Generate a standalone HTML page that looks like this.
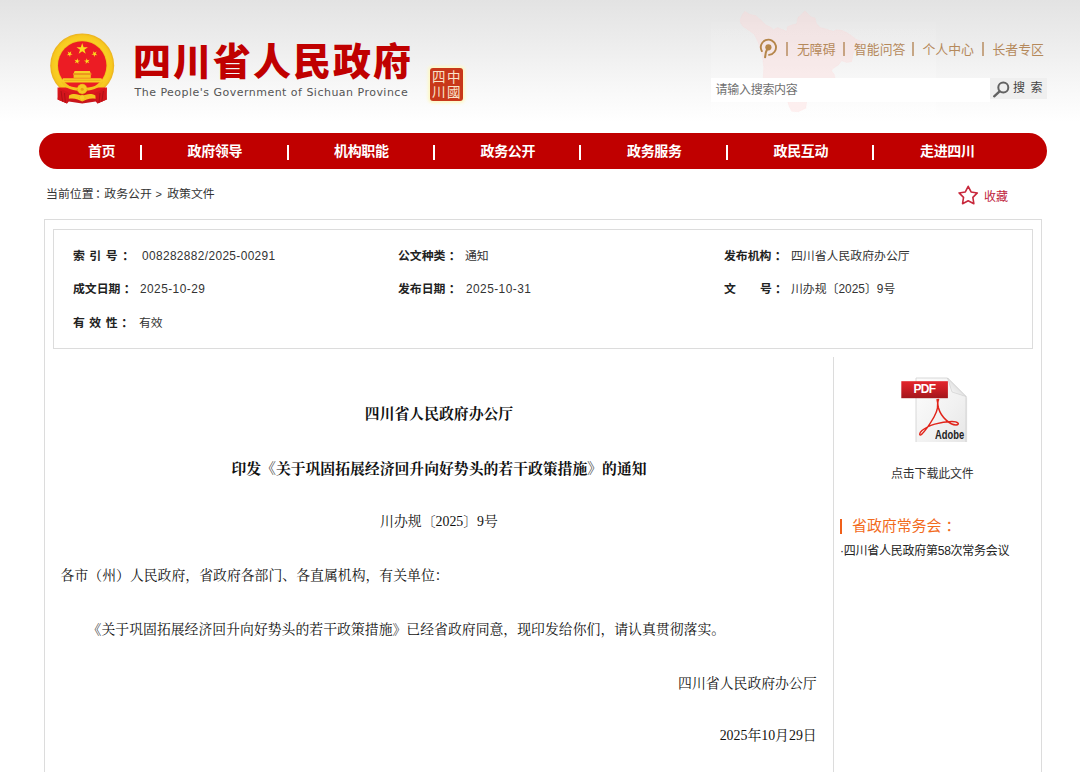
<!DOCTYPE html>
<html lang="zh-CN">
<head>
<meta charset="utf-8">
<title>四川省人民政府办公厅印发《关于巩固拓展经济回升向好势头的若干政策措施》的通知</title>
<style>
*{box-sizing:border-box;margin:0;padding:0}
html,body{width:1080px;height:772px;overflow:hidden;background:#fff}
body{position:relative;font-family:"Liberation Sans","Noto Sans CJK SC",sans-serif;font-size:12px;color:#333}
.abs{position:absolute;white-space:nowrap}
#hdbg{left:0;top:0;width:1080px;height:130px;background:linear-gradient(#e3e3e3 0,#ececec 40px,#f8f8f8 90px,#fff 122px)}
#title{left:133px;top:35.7px;font-size:38px;line-height:52px;font-weight:900;color:#c00000;letter-spacing:2px;font-family:"Liberation Sans","Noto Sans CJK SC",sans-serif}
#sub{left:134.5px;top:85px;font-family:'DejaVu Sans','Liberation Sans',sans-serif;font-size:11px;line-height:16px;color:#555;letter-spacing:0.48px}
.tl{top:39.5px;font-size:12.87px;line-height:20px;color:#b5895b}
.tsp{top:42px;width:2px;height:14px;background:#b5895b;opacity:.72}
#search{left:710.6px;top:77.5px;width:279.4px;height:24px;background:#fff;font-size:12px;line-height:24px;color:#707070;padding-left:5px;letter-spacing:-0.3px}
#sbtn{left:990px;top:78px;width:56.5px;height:21px;background:#efefef;font-size:12px;line-height:21px;color:#444}
#nav{left:39px;top:133px;width:1008px;height:36px;border-radius:18px;background:#c00000}
#nav .it{position:absolute;top:0;height:36px;line-height:36px;color:#fff;font-weight:bold;font-size:14px;letter-spacing:-0.4px;text-align:center;width:120px;margin-left:-60px}
#nav .sp{position:absolute;top:11.5px;width:2px;height:15px;background:#fff}
.cr{top:186.2px;font-size:11.9px;line-height:16px;color:#333}
#fav{left:984px;top:189px;font-size:12px;line-height:16px;color:#c0243c}
#outer{left:44px;top:219px;width:998px;height:600px;border:1px solid #dcdcdc;background:#fff}
#meta{left:53px;top:229px;width:980px;height:120px;border:1px solid #dcdcdc}
.lb{font-weight:bold;color:#222;font-size:11.88px;line-height:16px}
.lb i{font-style:normal;margin-left:3.3px;letter-spacing:0}
.vl{color:#333;font-size:11.88px;line-height:16px}
#vline{left:833px;top:357px;width:1px;height:420px;background:#dcdcdc}
.ser{font-family:"Liberation Serif","Noto Serif CJK SC",serif;color:#111}
.t1{font-size:14.84px;font-weight:bold;line-height:20px}
.p{font-size:13.86px;line-height:20px}
#seal{left:430px;top:68px;width:33px;height:33px;background:#c8371a;border-radius:3px;box-shadow:0 0 3px 1.5px #fdf8c6}
#seal span{position:absolute;font-family:"Noto Sans CJK SC",sans-serif;font-weight:400;font-size:13.5px;line-height:15px;color:#f9e3c8}
#pdf{left:899.5px;top:369.6px;width:72px;height:76px}
</style>
</head>
<body>
<div class="abs" id="hdbg"></div>
<div class="abs" style="left:711px;top:22px;width:225px;height:102px;background:linear-gradient(rgba(255,255,255,.05),rgba(255,255,255,.14) 30%,rgba(255,255,255,.3))"></div>
<svg class="abs" style="left:0;top:0" width="1080" height="130" viewBox="0 0 1080 130"><polygon points="740.0,20.0 742.5,14.2 745.0,11.3 749.2,14.2 755.8,15.8 760.8,20.0 765.8,25.0 770.0,26.7 773.3,29.7 777.5,27.5 781.7,29.2 786.7,31.3 787.5,26.7 791.7,25.0 796.7,23.7 798.0,17.5 801.7,14.2 805.0,10.8 808.3,14.2 810.8,16.7 815.0,18.0 816.3,23.3 820.0,27.5 826.7,29.2 833.3,31.3 836.7,29.7 841.7,30.3 846.7,32.5 851.7,35.8 855.8,39.2 863.3,41.7 860.8,45.8 856.7,48.3 853.3,53.3 852.5,57.5 851.7,61.7 846.7,62.5 841.7,60.8 838.3,65.0 833.3,68.3 831.3,70.8 834.2,74.2 835.0,78.0 826.7,86.7 816.7,93.3 806.7,101.0 805.8,108.3 798.3,111.7 791.7,111.3 789.2,106.7 787.5,101.0 783.3,93.3 770.0,86.7 763.3,78.0 763.7,66.7 762.5,56.7 760.0,48.3 758.3,42.5 754.2,34.2 748.3,30.0 743.3,26.7 740.8,23.3" fill="rgba(255,210,210,0.32)" stroke="rgba(255,210,210,0.15)" stroke-width="1" stroke-linejoin="round"/></svg>

<svg class="abs" style="left:50px;top:33px" width="65" height="72" viewBox="0 0 65 72">
<defs>
<radialGradient id="gring" cx="50%" cy="50%" r="50%"><stop offset="0.72" stop-color="#e9ab12"/><stop offset="0.8" stop-color="#f9cf25"/><stop offset="0.93" stop-color="#f7c81e"/><stop offset="1" stop-color="#eab020"/></radialGradient>
<linearGradient id="grib" x1="0" y1="0" x2="0" y2="1"><stop offset="0" stop-color="#e5191f"/><stop offset="1" stop-color="#c4141a"/></linearGradient>
</defs>
<circle cx="32.2" cy="32.4" r="32" fill="url(#gring)"/>
<path d="M7.5 54.5 L57 54.5 L56.8 66.5 L47.5 70.6 L45.6 68.6 L32.2 70.4 L18.8 68.6 L17 70.6 L7.6 66.5 Z" fill="url(#grib)"/>
<path d="M7.6 66.5 L17 70.6 L19 60 L9.5 55 Z" fill="#d3151c"/><path d="M56.8 66.5 L47.5 70.6 L45.5 60 L55 55 Z" fill="#d3151c"/>
<path d="M11 58 L12.6 68.6 M14.5 60 L15.4 69.8 M53.4 58 L51.8 68.6 M50 60 L49 69.8" stroke="#a90f14" stroke-width="0.9" fill="none"/>
<circle cx="32.2" cy="32.4" r="24.2" fill="#ec1c24"/>
<polygon points="32.20,10.00 33.55,14.15 37.91,14.15 34.38,16.71 35.73,20.85 32.20,18.29 28.67,20.85 30.02,16.71 26.49,14.15 30.85,14.15" fill="#fbdc1e"/>
<polygon points="21.25,18.22 20.78,20.42 22.73,21.54 20.49,21.78 20.02,23.98 19.11,21.93 16.87,22.16 18.54,20.65 17.63,18.60 19.58,19.72" fill="#fbdc1e"/>
<polygon points="42.95,18.22 44.62,19.72 46.57,18.60 45.66,20.65 47.33,22.16 45.09,21.93 44.18,23.98 43.71,21.78 41.47,21.54 43.42,20.42" fill="#fbdc1e"/>
<polygon points="27.64,25.15 27.95,27.38 30.17,27.77 28.15,28.76 28.46,30.99 26.89,29.37 24.87,30.35 25.93,28.36 24.36,26.74 26.58,27.14" fill="#fbdc1e"/>
<polygon points="36.46,25.15 37.52,27.14 39.74,26.74 38.17,28.36 39.23,30.35 37.21,29.37 35.64,30.99 35.95,28.76 33.93,27.77 36.15,27.38" fill="#fbdc1e"/>
<path d="M24.6 38 L39.8 38 L40.8 40.4 L23.6 40.4 Z" fill="#f8cf27"/>
<rect x="23" y="40.4" width="18.4" height="1.3" fill="#e9b21a"/>
<rect x="23.6" y="41.7" width="17.2" height="3.2" fill="#f6c722"/>
<path d="M13 45.2 L51.4 45.2 L53.4 49.4 L11 49.4 Z" fill="#f8cc24"/>
<path d="M14 47.3 L50.4 47.3" stroke="#e3a815" stroke-width="0.7"/>
<path d="M11 48.6 C13 54.5 22 57.6 28.5 57.8 L32.2 59.6 L36 57.8 C42.5 57.6 51.4 54.5 53.4 48.6 L50.5 49.8 C47.5 53.3 41 54.8 32.2 54.8 C23.4 54.8 17 53.3 14 49.8 Z" fill="#f5c41f"/>
<circle cx="32.2" cy="56" r="4.9" fill="#f6c821" stroke="#e2a512" stroke-width="0.8" stroke-dasharray="1.1 0.9"/>
<circle cx="32.2" cy="56.2" r="1.5" fill="#e8a010"/>
<path d="M19 62.4 C24 59.8 29 61.6 32.2 63.2 C35.4 61.6 40.4 59.8 45.4 62.4 L45.6 65.8 C40.5 64.6 35.5 66.6 32.2 68.4 C29 66.6 24 64.6 18.8 65.8 Z" fill="#f5c41f"/>
<circle cx="32.2" cy="64.6" r="2.7" fill="#f8d02a" stroke="#e2a512" stroke-width="0.6" stroke-dasharray="0.9 0.8"/>
</svg>
<div class="abs" id="seal"><span style="left:2px;top:1px">四</span><span style="left:17px;top:1px">中</span><span style="left:2px;top:16px">川</span><span style="left:17px;top:16px">國</span></div>
<div class="abs" id="title">四川省人民政府</div>
<div class="abs" id="sub">The People's Government of Sichuan Province</div>

<svg class="abs" style="left:759px;top:38px" width="20" height="22" viewBox="0 0 20 22"><path d="M2.82 13.1 A7.6 7.6 0 1 1 10.06 16.87" fill="none" stroke="#b5864a" stroke-width="1.9" stroke-linecap="round"/><circle cx="9.4" cy="9.3" r="3.1" fill="#b5864a"/><path d="M8.4 10.5 C7 13 6.3 16 6.1 19.2" fill="none" stroke="#b5864a" stroke-width="2.1" stroke-linecap="round"/></svg>
<div class="abs tl" style="left:797px">无障碍</div><div class="abs tl" style="left:854px">智能问答</div><div class="abs tl" style="left:922.5px">个人中心</div><div class="abs tl" style="left:992.5px">长者专区</div>
<div class="abs tsp" style="left:786px"></div><div class="abs tsp" style="left:843px"></div><div class="abs tsp" style="left:911.5px"></div><div class="abs tsp" style="left:981.5px"></div>
<div class="abs" id="search">请输入搜索内容</div>
<div class="abs" id="sbtn"><span style="margin-left:23px;letter-spacing:5.5px">搜索</span></div>

<div class="abs" id="nav">
  <div class="it" style="left:62.6px">首页</div><div class="sp" style="left:101.1px"></div>
  <div class="it" style="left:175.8px">政府领导</div><div class="sp" style="left:247.5px"></div>
  <div class="it" style="left:322.3px">机构职能</div><div class="sp" style="left:394px"></div>
  <div class="it" style="left:468.8px">政务公开</div><div class="sp" style="left:540.4px"></div>
  <div class="it" style="left:615.3px">政务服务</div><div class="sp" style="left:686.8px"></div>
  <div class="it" style="left:761.8px">政民互动</div><div class="sp" style="left:833.2px"></div>
  <div class="it" style="left:908.3px">走进四川</div>
</div>

<svg class="abs" style="left:990px;top:78px" width="24" height="22" viewBox="0 0 24 22"><circle cx="13.3" cy="9.5" r="5" fill="none" stroke="#626262" stroke-width="2"/><path d="M9.6 13.4 L4.2 18.3" stroke="#626262" stroke-width="2.4" stroke-linecap="round"/></svg>
<div class="abs cr" style="left:46px">当前位置<span style="margin-left:1.5px">：</span></div><div class="abs cr" style="left:104.3px">政务公开</div><div class="abs cr" style="left:155.6px;font-size:11px">&gt;</div><div class="abs cr" style="left:167.2px">政策文件</div>
<svg class="abs" style="left:957px;top:184px" width="22" height="22" viewBox="0 0 22 22"><polygon points="11.20,2.30 14.08,7.94 20.33,8.93 15.86,13.41 16.84,19.67 11.20,16.80 5.56,19.67 6.54,13.41 2.07,8.93 8.32,7.94" fill="none" stroke="#c8283c" stroke-width="1.6" stroke-linejoin="round"/></svg>
<div class="abs" id="fav">收藏</div>

<div class="abs" id="outer"></div>
<div class="abs" id="meta"></div>

<div class="abs lb" style="left:73px;top:248px;letter-spacing:4.5px">索引号<i style="margin-left:0">：</i></div><div class="abs vl" style="left:142px;top:248px;letter-spacing:.37px">008282882/2025-00291</div>
<div class="abs lb" style="left:398px;top:248px">公文种类<i>：</i></div><div class="abs vl" style="left:465px;top:248px">通知</div>
<div class="abs lb" style="left:724px;top:248px">发布机构<i>：</i></div><div class="abs vl" style="left:791px;top:248px">四川省人民政府办公厅</div>

<div class="abs lb" style="left:73px;top:281px">成文日期<i>：</i></div><div class="abs vl" style="left:140px;top:281px;letter-spacing:.45px">2025-10-29</div>
<div class="abs lb" style="left:398px;top:281px">发布日期<i>：</i></div><div class="abs vl" style="left:466px;top:281px;letter-spacing:.45px">2025-10-31</div>
<div class="abs lb" style="left:724px;top:281px">文<span style="display:inline-block;width:24px"></span>号<i>：</i></div><div class="abs vl" style="left:791px;top:281px">川办规〔2025〕9号</div>

<div class="abs lb" style="left:73px;top:315.3px;letter-spacing:4.5px">有效性<i style="margin-left:-1px">：</i></div><div class="abs vl" style="left:139px;top:315.3px">有效</div>

<div class="abs" id="vline"></div>

<div class="abs ser t1" style="left:61px;width:756px;text-align:center;top:404.3px">四川省人民政府办公厅</div>
<div class="abs ser t1" style="left:61px;width:756px;text-align:center;top:458.6px">印发《关于巩固拓展经济回升向好势头的若干政策措施》的通知</div>
<div class="abs ser p" style="left:61px;width:756px;text-align:center;top:512px">川办规〔2025〕9号</div>
<div class="abs ser p" style="left:60.6px;top:565.8px">各市（州）人民政府，省政府各部门、各直属机构，有关单位：</div>
<div class="abs ser p" style="left:87.6px;top:619.6px">《关于巩固拓展经济回升向好势头的若干政策措施》已经省政府同意，现印发给你们，请认真贯彻落实。</div>
<div class="abs ser p" style="right:263.3px;top:673.7px">四川省人民政府办公厅</div>
<div class="abs ser p" style="right:263.3px;top:726.3px">2025年10月29日</div>

<div class="abs" id="pdf">
<svg class="abs" style="left:0;top:0" width="72" height="72" viewBox="0 0 72 72">
<defs><linearGradient id="pg" x1="0" y1="0" x2="1" y2="1"><stop offset="0" stop-color="#fdfdfd"/><stop offset="0.6" stop-color="#f1f1f1"/><stop offset="1" stop-color="#e6e6e6"/></linearGradient>
<linearGradient id="pr" x1="0" y1="0" x2="0" y2="1"><stop offset="0" stop-color="#e3262d"/><stop offset="0.5" stop-color="#c81d24"/><stop offset="1" stop-color="#a2171c"/></linearGradient>
<linearGradient id="pf" x1="0" y1="1" x2="1" y2="0"><stop offset="0" stop-color="#fff"/><stop offset="1" stop-color="#c9c9c9"/></linearGradient></defs>
<path d="M16.5 8.5 L48 8.5 L66.5 27 L66.5 73 L16.5 73 Z" fill="#bdbdbd" opacity="0.35" transform="translate(0.6,0.8)"/>
<path d="M16 8 L47.5 8 L66 26.5 L66 72.6 L16 72.6 Z" fill="url(#pg)" stroke="#cfcfcf" stroke-width="0.8"/>
<path d="M47.5 8 L66 26.5 L52 22 Z" fill="url(#pf)" stroke="#c4c4c4" stroke-width="0.5"/>
<rect x="1.3" y="11.2" width="46.6" height="17" fill="url(#pr)"/>
<path d="M37 29 C38.5 34 38 40 34 47 C30 54 24 62 21.5 64.5 C19.5 66 18.5 63.5 22 60.5 C28 55.5 40 51.5 52 51.5 C58 51.5 60.5 54.5 56 55 C50 55 41 47 38.5 38 C37.5 34 37.5 31 38.8 29" fill="none" stroke="#e1251b" stroke-width="1.5" stroke-linejoin="round"/>
</svg>
<div class="abs" style="left:13px;top:11px;width:24px;text-align:center;font:bold 12px/17px 'Liberation Sans',sans-serif;color:#fff;letter-spacing:-0.6px">PDF</div>
<div class="abs" style="left:35px;top:57px;font:bold 13px/16px 'Liberation Sans',sans-serif;color:#222;transform:scaleX(0.72);transform-origin:0 0">Adobe</div>
</div>
<div class="abs" style="left:891px;top:466.3px;font-size:12px;line-height:16px;color:#333;letter-spacing:-0.2px">点击下载此文件</div>
<div class="abs" style="left:840px;top:519.2px;width:2px;height:14.6px;background:#f0601a"></div>
<div class="abs" style="left:852px;top:516.2px;font-size:15px;line-height:20px;color:#f26b1d;letter-spacing:-0.1px">省政府常务会<span style="margin-left:4px">：</span></div>
<div class="abs" style="left:840px;top:543px;font-size:12px;line-height:16px;color:#222;letter-spacing:-0.25px">·四川省人民政府第58次常务会议</div>

</body>
</html>
